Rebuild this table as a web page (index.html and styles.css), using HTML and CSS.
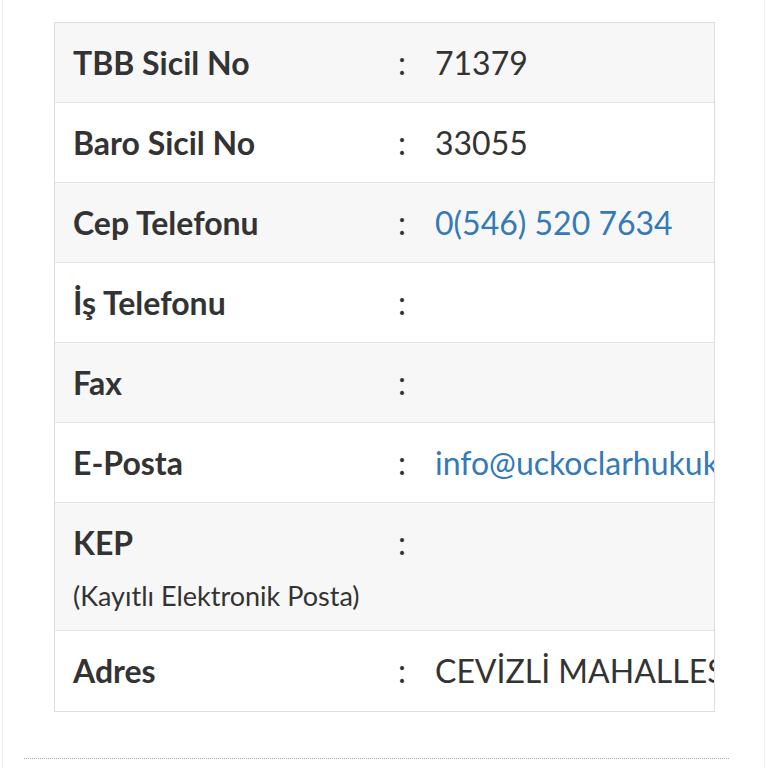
FILE: index.html
```html
<!DOCTYPE html>
<html lang="tr">
  <head>
    <meta charset="UTF-8">
    <title>Avukat Bilgileri</title>
    <meta name="viewport" content="width=device-width, initial-scale=1">
    <link rel="stylesheet" href="styles.css">
  </head>
  <body>
    <div class="page">
      <div class="info-box">
        <div class="info-row">
          <div class="info-label">TBB Sicil No</div>
          <div class="info-sep">:</div>
          <div class="info-value">71379</div>
        </div>
        <div class="info-row">
          <div class="info-label">Baro Sicil No</div>
          <div class="info-sep">:</div>
          <div class="info-value">33055</div>
        </div>
        <div class="info-row">
          <div class="info-label">Cep Telefonu</div>
          <div class="info-sep">:</div>
          <div class="info-value"><a href="tel:05465207634">0(546) 520 7634</a></div>
        </div>
        <div class="info-row">
          <div class="info-label">İş Telefonu</div>
          <div class="info-sep">:</div>
          <div class="info-value"></div>
        </div>
        <div class="info-row">
          <div class="info-label">Fax</div>
          <div class="info-sep">:</div>
          <div class="info-value"></div>
        </div>
        <div class="info-row">
          <div class="info-label">E-Posta</div>
          <div class="info-sep">:</div>
          <div class="info-value"><a href="mailto:info@uckoclarhukuk.com">info@uckoclarhukuk.com</a></div>
        </div>
        <div class="info-row">
          <div class="info-label">KEP
            <span class="info-sub">(Kayıtlı Elektronik Posta)</span>
          </div>
          <div class="info-sep">:</div>
          <div class="info-value"></div>
        </div>
        <div class="info-row">
          <div class="info-label">Adres</div>
          <div class="info-sep">:</div>
          <div class="info-value">CEVİZLİ MAHALLESİ TUGAY YOLU CADDESİ</div>
        </div>
      </div>
      <div class="divider"></div>
    </div>
  </body>
</html>
```

FILE: styles.css
```css
body {
  margin: 0;
  padding: 0;
  background: #fff;
  color: #333;
  font-family: Lato, "Noto Sans", sans-serif;
}

.page {
  box-sizing: border-box;
  width: 763px;
  min-height: 768px;
  margin-left: 2px;
  padding: 22px 0 0 0;
  border-left: 1px solid #eee;
  border-right: 1px solid #eee;
}

/* info table */

.info-box {
  box-sizing: border-box;
  width: 661px;
  margin-left: 51px;
  border: 1px solid #ddd;
  overflow: hidden;
}

.info-row {
  display: flex;
  align-items: flex-start;
  box-sizing: border-box;
  padding: 20px 0 19px 0;
  border-bottom: 1px solid #e3e3e3;
  font-size: 32px;
  line-height: 40px;
  white-space: nowrap;
}
.info-row:last-child {
  border-bottom: none;
  padding-bottom: 20px;
}
.info-row:nth-child(odd) {
  background: #f7f7f7;
}

.info-label {
  flex: 0 0 323px;
  padding-left: 18px;
  font-weight: 700;
  color: #333;
}

.info-sub {
  display: block;
  margin-top: 17px;
  font-size: 27px;
  line-height: 31px;
  font-weight: 400;
}

.info-sep {
  flex: 0 0 37px;
  padding-left: 2px;
}

.info-value {
  flex: 1 1 auto;
  overflow: hidden;
}

.info-value a {
  color: #337ab7;
  text-decoration: none;
}

.divider {
  width: 705px;
  margin: 46px 0 0 21px;
  border-top: 1px dotted #aaa;
}
```
